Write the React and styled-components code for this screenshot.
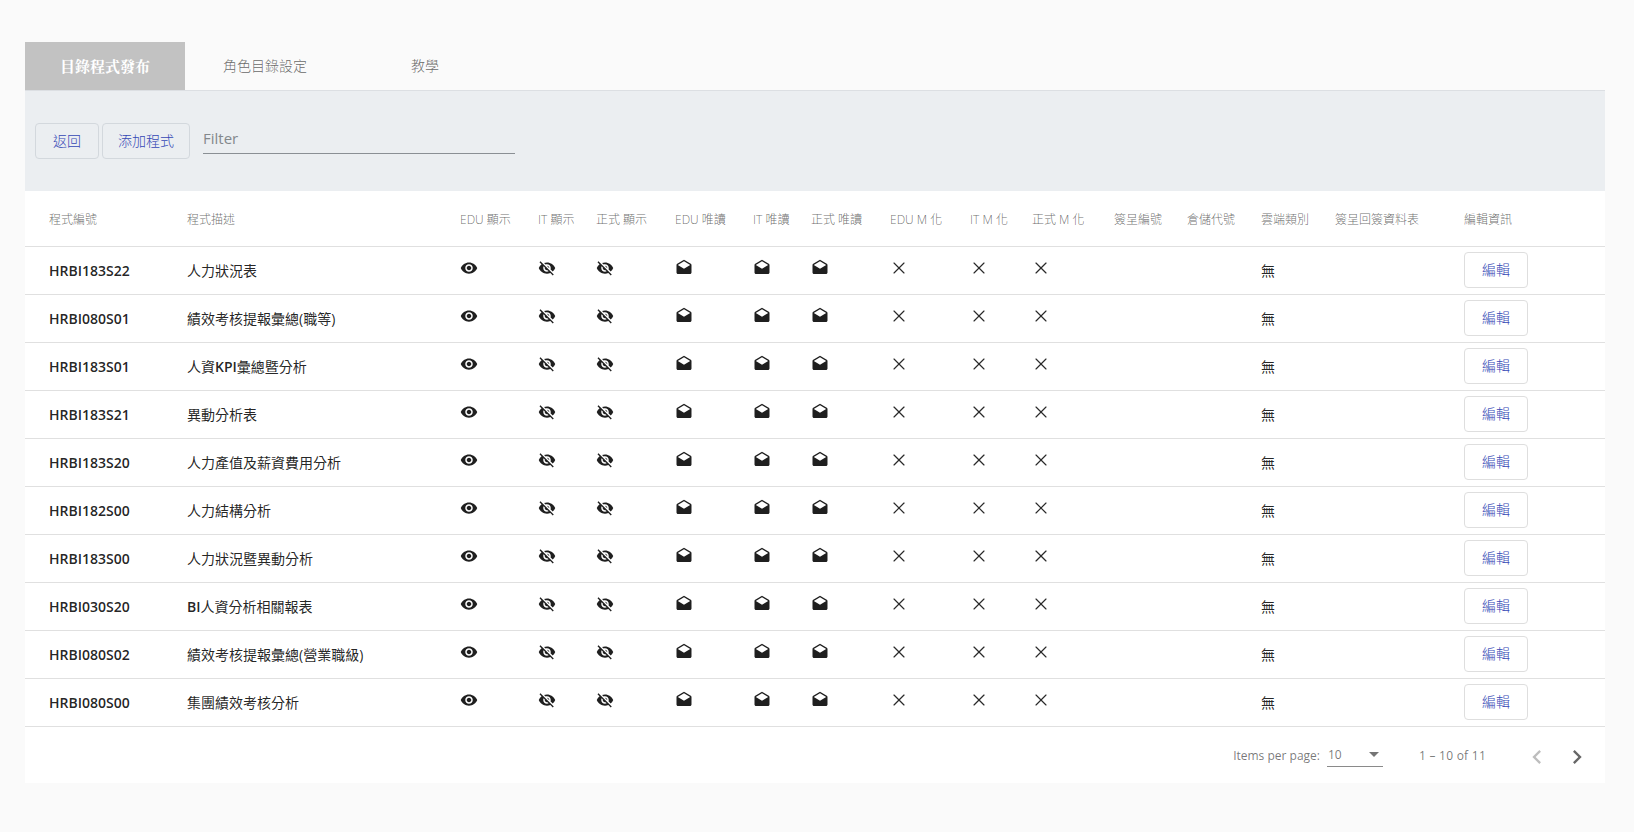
import React from 'react';
import styled, { createGlobalStyle } from 'styled-components';
import { MdVisibility, MdVisibilityOff, MdDrafts, MdChevronLeft, MdChevronRight } from 'react-icons/md';
import { X } from 'lucide-react';

const FONT = '"Open Sans", "Noto Sans", "Noto Sans CJK TC", sans-serif';

const GlobalStyle = createGlobalStyle`
  html, body {
    margin: 0;
    background: #fafafa;
    font-family: ${FONT};
  }
`;

const Page = styled.div`
  padding: 42px 29px 49px 25px;
`;
const TabBar = styled.div`
  display: flex;
  height: 48px;
  border-bottom: 1px solid #dcdfe3;
`;
const Tab = styled.div`
  width: 160px;
  display: flex;
  align-items: center;
  justify-content: center;
  padding-bottom: 2px;
  box-sizing: border-box;
  font-size: ${props => props.$active ? 15 : 14}px;
  font-family: ${props => props.$active ? '"Liberation Serif", "Noto Serif CJK TC", "Noto Sans CJK TC", serif' : FONT};
  font-weight: ${props => props.$active ? 700 : 300};
  color: ${props => props.$active ? '#fff' : 'rgba(0, 0, 0, .6)'};
  background: ${props => props.$active ? '#c2c2c2' : 'transparent'};
`;
const Toolbar = styled.div`
  height: 100px;
  background: #ebeef1;
  display: flex;
  align-items: center;
  padding: 0 0 0 10px;
  gap: 3px;
`;
const ToolButton = styled.button`
  height: 36px;
  width: ${props => props.$width}px;
  border: 1px solid #d3d8dd;
  border-radius: 4px;
  background: transparent;
  color: #3447b5;
  font-family: ${FONT};
  font-size: 14px;
  font-weight: 300;
  padding: 0 0 3px;
`;
const FilterBox = styled.div`
  width: 312px;
  height: 31px;
  margin: 0 0 5px 10px;
  border-bottom: 1px solid #8a8f94;
  box-sizing: border-box;
  font-size: 15px;
  line-height: 30px;
  color: #83888c;
`;
const Card = styled.div`
  background: #fff;
`;
const Table = styled.table`
  width: 100%;
  table-layout: fixed;
  border-collapse: separate;
  border-spacing: 0;
`;
const HeadCell = styled.th`
  height: 55px;
  padding: 0 0 0 ${props => props.$pad || 0}px;
  text-align: left;
  font-size: 12px;
  font-weight: 300;
  color: rgba(0, 0, 0, .6);
  white-space: nowrap;
  border-bottom: 1px solid #e0e0e0;
`;
const Row = styled.tr`
  height: 48px;
`;
const Cell = styled.td`
  padding: 0 0 ${props => props.$cjk ? 2 : 0}px ${props => props.$pad || 0}px;
  box-sizing: border-box;
  font-size: 14px;
  font-weight: ${props => props.$bold ? 600 : 400};
  color: rgba(0, 0, 0, .87);
  white-space: nowrap;
  border-bottom: 1px solid #e0e0e0;
  vertical-align: middle;
`;
const LatinPart = styled.b`
  font-weight: 600;
`;
const IconWrap = styled.span`
  display: flex;
  width: 18px;
  height: 18px;
  margin: -5px 0 0;
  font-size: 18px;
  color: #1f1f1f;
`;
const CloseWrap = styled.span`
  display: block;
  width: 20px;
  height: 20px;
  margin: -6px 0 0 -1px;
  color: #2a2a2a;
`;
const EditButton = styled.button`
  display: block;
  width: 64px;
  height: 36px;
  margin-bottom: 1px;
  border: 1px solid #dedede;
  border-radius: 4px;
  background: #fff;
  color: #3447b5;
  font-family: ${FONT};
  font-size: 14px;
  font-weight: 300;
  padding: 0 0 2px;
`;
const Paginator = styled.div`
  height: 56px;
  display: flex;
  align-items: center;
  justify-content: flex-end;
  font-size: 12px;
  color: rgba(0, 0, 0, .54);
  padding-right: 8px;
`;
const PageSelect = styled.div`
  width: 56px;
  height: 24px;
  margin-left: 7px;
  display: flex;
  align-items: center;
  justify-content: space-between;
  border-bottom: 1px solid #8a8a8a;
  box-sizing: border-box;
  padding: 0 4px 0 1px;
`;
const Caret = styled.span`
  width: 0;
  height: 0;
  border-left: 5px solid transparent;
  border-right: 5px solid transparent;
  border-top: 5px solid rgba(0, 0, 0, .54);
`;
const RangeLabel = styled.div`
  margin: 0 31px 0 36px;
  letter-spacing: .25px;
`;
const PageArrow = styled.div`
  width: 40px;
  height: 40px;
  padding-top: 3px;
  box-sizing: border-box;
  display: flex;
  align-items: center;
  justify-content: center;
  font-size: 28px;
  color: ${props => props.$disabled ? 'rgba(0, 0, 0, .26)' : 'rgba(0, 0, 0, .6)'};
`;

const columns = [
  { label: '程式編號', width: 162, pad: 24 },
  { label: '程式描述', width: 273 },
  { label: 'EDU 顯示', width: 78 },
  { label: 'IT 顯示', width: 58 },
  { label: '正式 顯示', width: 79 },
  { label: 'EDU 唯讀', width: 78 },
  { label: 'IT 唯讀', width: 58 },
  { label: '正式 唯讀', width: 79 },
  { label: 'EDU M 化', width: 80 },
  { label: 'IT M 化', width: 62 },
  { label: '正式 M 化', width: 82 },
  { label: '簽呈編號', width: 73 },
  { label: '倉儲代號', width: 74 },
  { label: '雲端類別', width: 74 },
  { label: '簽呈回簽資料表', width: 129 },
  { label: '編輯資訊' },
];

const rows = [
  ['HRBI183S22', '人力狀況表'],
  ['HRBI080S01', '績效考核提報彙總(職等)'],
  ['HRBI183S01', '人資KPI彙總暨分析'],
  ['HRBI183S21', '異動分析表'],
  ['HRBI183S20', '人力產值及薪資費用分析'],
  ['HRBI182S00', '人力結構分析'],
  ['HRBI183S00', '人力狀況暨異動分析'],
  ['HRBI030S20', 'BI人資分析相關報表'],
  ['HRBI080S02', '績效考核提報彙總(營業職級)'],
  ['HRBI080S00', '集團績效考核分析'],
];

// latin runs in the description column come out heavier than the CJK around them
const renderName = name => name.split(/([A-Z]+)/).map((part, i) => (
  i % 2 ? <LatinPart key={part}>{part}</LatinPart> : part
));

function Icon({ as: Glyph }) {
  return (
    <IconWrap>
      <Glyph />
    </IconWrap>
  );
}

function CloseIcon() {
  return (
    <CloseWrap>
      <X size={20} strokeWidth={1.4} />
    </CloseWrap>
  );
}

export default function App() {
  return (
    <Page>
      <GlobalStyle />
      <TabBar>
        <Tab $active>目錄程式發布</Tab>
        <Tab>角色目錄設定</Tab>
        <Tab>教學</Tab>
      </TabBar>
      <Toolbar>
        <ToolButton $width={64}>返回</ToolButton>
        <ToolButton $width={88}>添加程式</ToolButton>
        <FilterBox>Filter</FilterBox>
      </Toolbar>
      <Card>
        <Table>
          <colgroup>
            {columns.map(col => <col key={col.label} style={{ width: col.width }} />)}
          </colgroup>
          <thead>
            <tr>
              {columns.map(col => <HeadCell key={col.label} $pad={col.pad}>{col.label}</HeadCell>)}
            </tr>
          </thead>
          <tbody>
            {rows.map(([code, name]) => (
              <Row key={code}>
                <Cell $pad={24} $bold>{code}</Cell>
                <Cell $cjk>{renderName(name)}</Cell>
                <Cell><Icon as={MdVisibility} /></Cell>
                <Cell><Icon as={MdVisibilityOff} /></Cell>
                <Cell><Icon as={MdVisibilityOff} /></Cell>
                <Cell><Icon as={MdDrafts} /></Cell>
                <Cell><Icon as={MdDrafts} /></Cell>
                <Cell><Icon as={MdDrafts} /></Cell>
                <Cell><CloseIcon /></Cell>
                <Cell><CloseIcon /></Cell>
                <Cell><CloseIcon /></Cell>
                <Cell />
                <Cell />
                <Cell $cjk>無</Cell>
                <Cell />
                <Cell><EditButton>編輯</EditButton></Cell>
              </Row>
            ))}
          </tbody>
        </Table>
        <Paginator>
          <span>Items per page:</span>
          <PageSelect>
            <span>10</span>
            <Caret />
          </PageSelect>
          <RangeLabel>1 – 10 of 11</RangeLabel>
          <PageArrow $disabled><MdChevronLeft /></PageArrow>
          <PageArrow><MdChevronRight /></PageArrow>
        </Paginator>
      </Card>
    </Page>
  );
}
